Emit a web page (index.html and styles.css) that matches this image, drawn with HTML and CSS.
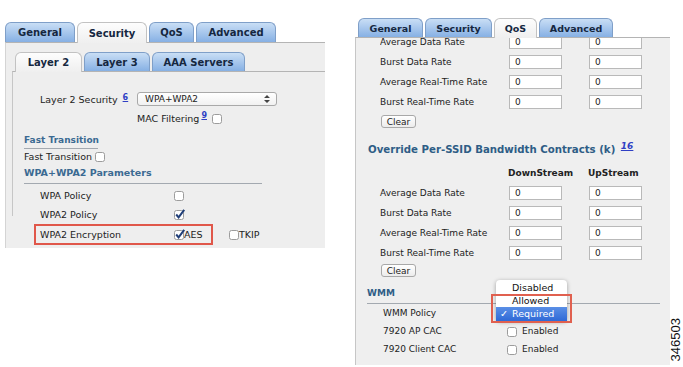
FILE: index.html
```html
<!DOCTYPE html>
<html lang="en">

<head>
  <meta charset="UTF-8">
  <title>WLAN Security and QoS</title>
  <link rel="stylesheet" href="styles.css">
</head>

<body>
  <!-- Security tab -->
  <div class="shot-left">
    <div class="tabs">
      <span class="tab w70">General</span>
      <span class="tab w70 active">Security</span>
      <span class="tab w45">QoS</span>
      <span class="tab w80">Advanced</span>
    </div>
    <div class="panel">
      <div class="subtabs">
        <span class="tab w67 active">Layer 2</span>
        <span class="tab w66">Layer 3</span>
        <span class="tab w93">AAA Servers</span>
      </div>
      <div class="subpanel">
        <div class="row sec-row">
          <span class="sec-label">Layer 2 Security <a class="help" href="#">6</a></span>
          <span class="select">WPA+WPA2
            <svg class="arrows" width="6" height="8" viewBox="0 0 6 8"><path d="M3 0 L6 3 H0 Z M3 8 L6 5 H0 Z" fill="#444"/></svg>
          </span>
        </div>
        <div class="row mac-row">
          MAC Filtering<a class="help" href="#">9</a>
          <svg class="cb" width="11" height="11" viewBox="0 0 11 11"><rect x="0.5" y="1.5" width="9" height="9" rx="2" fill="#fff" stroke="#9c9c9c"/></svg>
        </div>
        <div class="heading short">Fast Transition</div>
        <div class="row">
          Fast Transition
          <svg class="cb ft" width="11" height="11" viewBox="0 0 11 11"><rect x="0.5" y="1.5" width="9" height="9" rx="2" fill="#fff" stroke="#9c9c9c"/></svg>
        </div>
        <div class="heading long">WPA+WPA2 Parameters</div>
        <div class="row param first">
          <span class="param-label">WPA Policy</span>
          <svg class="cb" width="11" height="11" viewBox="0 0 11 11"><rect x="0.5" y="1.5" width="9" height="9" rx="2" fill="#fff" stroke="#9c9c9c"/></svg>
        </div>
        <div class="row param">
          <span class="param-label">WPA2 Policy</span>
          <svg class="cb" width="11" height="11" viewBox="0 0 11 11"><rect x="0.5" y="1.5" width="9" height="9" rx="2" fill="#fff" stroke="#9c9c9c"/><path d="M2.2 5.5 L4.6 8.4 L10.2 0.8" fill="none" stroke="#213f78" stroke-width="2"/></svg>
        </div>
        <div class="enc-row">
          <div class="marked">
            <span class="param-label">WPA2 Encryption</span>
            <svg class="cb" width="11" height="11" viewBox="0 0 11 11"><rect x="0.5" y="1.5" width="9" height="9" rx="2" fill="#fff" stroke="#9c9c9c"/><path d="M2.2 5.5 L4.6 8.4 L10.2 0.8" fill="none" stroke="#213f78" stroke-width="2"/></svg>
            <span>AES</span>
          </div>
          <svg class="cb tkip" width="11" height="11" viewBox="0 0 11 11"><rect x="0.5" y="1.5" width="9" height="9" rx="2" fill="#fff" stroke="#9c9c9c"/></svg>
          <span>TKIP</span>
        </div>
      </div>
    </div>
  </div>

  <!-- QoS tab -->
  <div class="shot-right">
    <div class="tabs right-tabs">
      <span class="tab w65">General</span>
      <span class="tab w67">Security</span>
      <span class="tab w43 active">QoS</span>
      <span class="tab w74">Advanced</span>
    </div>
    <div class="qos">
      <div class="clip">
        <div class="rate-row cut">
          <span>Average Data Rate</span><span class="field">0</span><span class="field">0</span>
        </div>
      </div>
      <div class="rate-row">
        <span>Burst Data Rate</span><span class="field">0</span><span class="field">0</span>
      </div>
      <div class="rate-row">
        <span>Average Real-Time Rate</span><span class="field">0</span><span class="field">0</span>
      </div>
      <div class="rate-row">
        <span>Burst Real-Time Rate</span><span class="field">0</span><span class="field">0</span>
      </div>
      <button class="clear">Clear</button>

      <div class="qos-heading">Override Per-SSID Bandwidth Contracts (k) <a class="help italic" href="#">16</a></div>
      <div class="rate-row col-head">
        <span></span><span>DownStream</span><span>UpStream</span>
      </div>
      <div class="rate-row first">
        <span>Average Data Rate</span><span class="field">0</span><span class="field">0</span>
      </div>
      <div class="rate-row">
        <span>Burst Data Rate</span><span class="field">0</span><span class="field">0</span>
      </div>
      <div class="rate-row">
        <span>Average Real-Time Rate</span><span class="field">0</span><span class="field">0</span>
      </div>
      <div class="rate-row">
        <span>Burst Real-Time Rate</span><span class="field">0</span><span class="field">0</span>
      </div>
      <button class="clear second">Clear</button>

      <div class="qos-heading wmm">WMM</div>
      <div class="wmm-row policy">
        <span>WMM Policy</span>
      </div>
      <div class="wmm-row">
        <span>7920 AP CAC</span>
        <svg class="cb" width="11" height="11" viewBox="0 0 11 11"><rect x="0.5" y="1.5" width="9" height="9" rx="2" fill="#fff" stroke="#9c9c9c"/></svg>
        <span>Enabled</span>
      </div>
      <div class="wmm-row">
        <span>7920 Client CAC</span>
        <svg class="cb" width="11" height="11" viewBox="0 0 11 11"><rect x="0.5" y="1.5" width="9" height="9" rx="2" fill="#fff" stroke="#9c9c9c"/></svg>
        <span>Enabled</span>
      </div>
    </div>

    <!-- open WMM policy menu -->
    <div class="menu">
      <div class="menu-item">Disabled</div>
      <div class="menu-item">Allowed</div>
      <div class="menu-item selected"><span class="tick">✓</span>Required</div>
    </div>
    <div class="menu-mark"></div>
  </div>

  <div class="fig-id">346503</div>
</body>

</html>
```

FILE: styles.css
```css
* {
  box-sizing: border-box;
}

body {
  margin: 0;
  width: 683px;
  height: 367px;
  overflow: hidden;
  background: #ffffff;
  font-family: 'DejaVu Sans', Verdana, sans-serif;
  color: #222222;
  display: flex;
  align-items: flex-start;
}

/* ---------- tabs ---------- */

.tabs {
  display: flex;
  align-items: flex-end;
  height: 20px;
}

.tab {
  height: 20px;
  margin-right: 2px;
  border: 1px solid #7f9fc8;
  border-bottom: none;
  border-radius: 6px 6px 0 0;
  background: linear-gradient(#c9def5, #86b0e4);
  color: #152740;
  font-weight: bold;
  display: flex;
  align-items: center;
  justify-content: center;
  white-space: nowrap;
}

.tab.active {
  background: linear-gradient(#fdfdfd, #efefef);
  border-color: #c2c2c2;
  height: 21px;
  margin-bottom: -1px;
  position: relative;
}

.w43 { width: 43px; }
.w45 { width: 45px; }
.w65 { width: 65px; }
.w66 { width: 66px; }
.w67 { width: 67px; }
.w70 { width: 70px; }
.w74 { width: 74px; }
.w80 { width: 80px; }
.w93 { width: 93px; }

.help {
  color: #2f3fc4;
  font-size: 8px;
  font-weight: bold;
  text-decoration: underline;
  position: relative;
  top: -3px;
  margin-left: 2px;
}

.help.italic {
  font-style: italic;
  font-size: 9px;
  top: -4px;
}

.cb {
  flex: none;
  overflow: visible;
}

/* ---------- security screenshot ---------- */

.shot-left {
  margin: 22px 0 0 5px;
  width: 320px;
  font-size: 9.5px;
}

.shot-left .tab {
  font-size: 10px;
}

.panel {
  height: 206px;
  background: #eeeeee;
  border-top: 1px solid #b4b4b4;
  border-left: 1px solid #d4d4d4;
  padding: 9px 0 0 6px;
}

.subtabs {
  display: flex;
  align-items: flex-end;
  height: 19px;
  padding-left: 3px;
}

.subtabs .tab {
  height: 19px;
}

.subtabs .tab.active {
  height: 20px;
}

.subpanel {
  height: 145px;
  border-top: 1px solid #b4b4b4;
  border-left: 1px solid #c6c6c6;
  padding-left: 11px;
}

.row {
  display: flex;
  align-items: center;
  height: 14px;
}

.sec-row {
  margin-top: 20px;
  padding-left: 16px;
}

.sec-label {
  width: 97px;
}

.select {
  width: 140px;
  height: 14px;
  border: 1px solid #a9a9a9;
  border-radius: 3px;
  background: linear-gradient(#ffffff, #f1f1f1);
  display: flex;
  align-items: center;
  justify-content: space-between;
  padding: 0 6px 0 7px;
  font-size: 9px;
}

.mac-row {
  margin-top: 5px;
  padding-left: 113px;
}

.mac-row .cb {
  margin-left: 5px;
}

.heading {
  margin-top: 8px;
  height: 16px;
  line-height: 14px;
  border-bottom: 1px solid #a3a9b0;
  color: #3b6a92;
  font-weight: bold;
  white-space: nowrap;
}

.heading.short {
  width: 74px;
  font-size: 9px;
}

.heading.long {
  width: 238px;
  height: 18px;
  margin-top: 3px;
}

.row .ft {
  margin-left: 3px;
}

.param {
  margin-top: 5px;
  padding-left: 16px;
}

.param.first {
  margin-top: 4px;
}

.param-label {
  width: 134px;
}

.enc-row {
  display: flex;
  align-items: center;
  margin-top: 3px;
  padding-left: 10px;
}

.marked {
  display: flex;
  align-items: center;
  width: 179px;
  height: 21px;
  border: 2px solid #e0574a;
  padding-left: 4px;
}

.marked .cb {
  margin-right: -1px;
}

.tkip {
  margin-left: 16px;
  margin-right: -1px;
}

/* ---------- QoS screenshot ---------- */

.shot-right {
  margin: 18px 0 0 30px;
  width: 315px;
  font-size: 9px;
  position: relative;
}

.right-tabs {
  height: 19px;
  padding-left: 3px;
}

.right-tabs .tab {
  height: 19px;
  font-size: 9.5px;
}

.right-tabs .tab.active {
  height: 20px;
}

.qos {
  height: 328px;
  background: #efefef;
  border-top: 1px solid #b4b4b4;
  border-left: 1px solid #c6c6c6;
  padding-left: 24px;
}

.clip {
  height: 11px;
  overflow: hidden;
}

.rate-row {
  display: grid;
  grid-template-columns: 129px 80px 53px;
  align-items: center;
  height: 14px;
  margin-top: 6px;
  white-space: nowrap;
}

.rate-row.cut {
  margin-top: -3px;
}

.rate-row.first {
  margin-top: 7px;
}

.field {
  width: 53px;
  height: 14px;
  background: #ffffff;
  border: 1px solid #b9b9b9;
  padding-left: 5px;
  line-height: 12px;
}

.clear {
  display: block;
  margin: 6px 0 0 1px;
  width: 35px;
  height: 13px;
  padding: 0;
  font-family: inherit;
  font-size: 9px;
  color: #222222;
  background: linear-gradient(#ffffff, #ececec);
  border: 1px solid #a8a8a8;
  border-radius: 3px;
}

.clear.second {
  margin-top: 4px;
}

.qos-heading {
  margin: 15px 0 0 -12px;
  height: 14px;
  line-height: 14px;
  color: #2e5d86;
  font-size: 10.2px;
  font-weight: bold;
  white-space: nowrap;
}

.col-head {
  margin-top: 10px;
  height: 12px;
  font-weight: bold;
  margin-left: -1px;
}

.qos-heading.wmm {
  margin: 9px 0 0 -13px;
  width: 293px;
  height: 18px;
  font-size: 9px;
  border-bottom: 1px solid #a3a9b0;
}

.wmm-row {
  display: flex;
  align-items: center;
  height: 14px;
  margin-top: 4px;
  padding-left: 3px;
}

.wmm-row.policy {
  margin-top: 2px;
}

.wmm-row > span:first-child {
  width: 124px;
}

.wmm-row .cb {
  margin-right: 4px;
}

/* open popup menu over the WMM policy select */
.menu {
  position: absolute;
  left: 141px;
  top: 262px;
  width: 71px;
  padding-top: 1px;
  background: #ffffff;
  border-radius: 4px;
  box-shadow: 0 1px 4px rgba(0, 0, 0, 0.35);
  font-size: 9.5px;
  color: #111111;
}

.menu-item {
  height: 13px;
  line-height: 13px;
  padding-left: 16px;
}

.menu-item.selected {
  height: 14px;
  line-height: 14px;
  background: linear-gradient(#5a8fe6, #2f69d6);
  color: #ffffff;
  padding-left: 4px;
}

.tick {
  display: inline-block;
  width: 12px;
}

.menu-mark {
  position: absolute;
  left: 136px;
  top: 276px;
  width: 81px;
  height: 29px;
  border: 2px solid #e0604f;
}

.fig-id {
  margin: 318px 0 0 1px;
  writing-mode: vertical-rl;
  transform: rotate(180deg);
  font-family: 'Liberation Sans', Arial, sans-serif;
  font-size: 13px;
  line-height: 10px;
  color: #111111;
}
```
